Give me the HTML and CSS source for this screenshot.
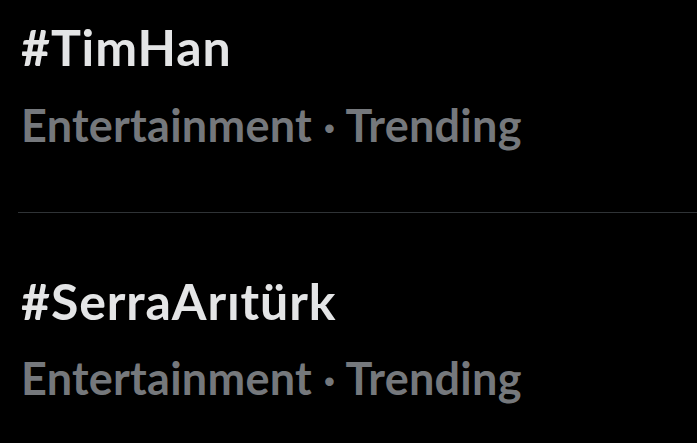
FILE: index.html
```html
<!DOCTYPE html>
<html>
<head>
<meta charset="utf-8">
<link rel="stylesheet" href="styles.css">
</head>
<body>
<div class="list">
  <div class="trend">
    <div class="tag">#TimHan</div>
    <div class="meta">Entertainment · Trending</div>
  </div>
  <div class="divider"></div>
  <div class="trend second">
    <div class="tag">#SerraArıtürk</div>
    <div class="meta">Entertainment · Trending</div>
  </div>
</div>
</body>
</html>
```
FILE: styles.css
```css
html, body {
  margin: 0;
  padding: 0;
  background: #000;
}
body {
  width: 697px;
  height: 443px;
  overflow: hidden;
  font-family: Lato, "Open Sans", sans-serif;
}
.list {
  display: flex;
  flex-direction: column;
}
.trend {
  padding-left: 21px;
  display: flex;
  flex-direction: column;
}
.trend:first-child {
  padding-top: 17px;
}
.tag {
  color: #e4e5e6;
  font-weight: 700;
  font-size: 50px;
  line-height: 60px;
  letter-spacing: 0.9px;
}
.meta {
  color: #75787c;
  font-weight: 700;
  font-size: 45px;
  line-height: 54px;
  letter-spacing: 0.25px;
  margin-top: 20.5px;
}
.divider {
  height: 1px;
  background: #2f3336;
  margin-left: 18px;
  margin-top: 60px;
}
.second {
  padding-top: 58px;
}
```
